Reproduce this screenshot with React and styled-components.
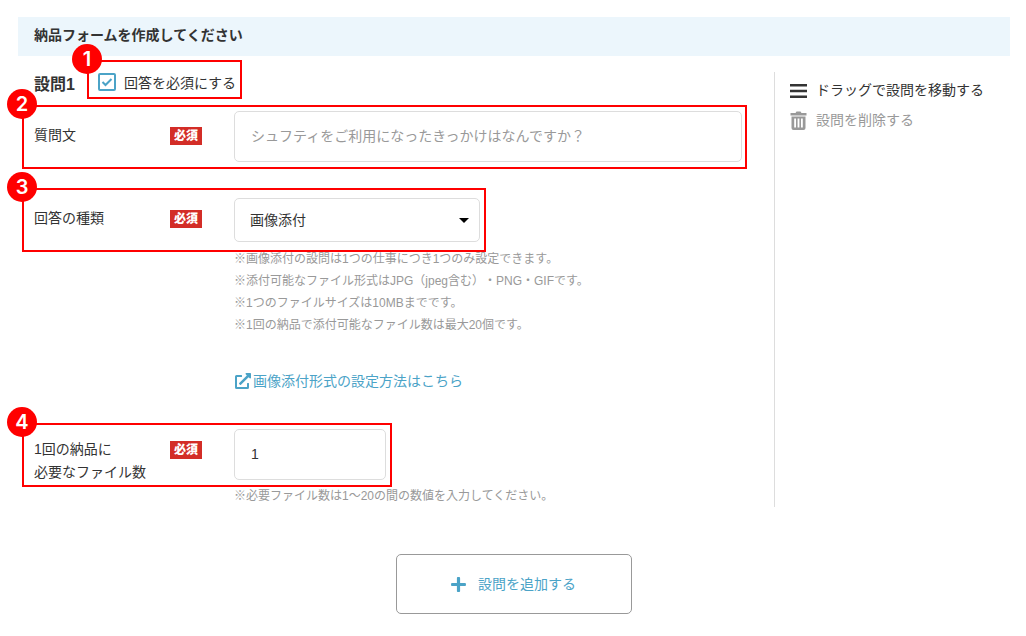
import styled, { createGlobalStyle } from "styled-components";
import { FaPlus, FaExternalLinkAlt } from "react-icons/fa";

const hints = [
  "※画像添付の設問は1つの仕事につき1つのみ設定できます。",
  "※添付可能なファイル形式はJPG（jpeg含む）・PNG・GIFです。",
  "※1つのファイルサイズは10MBまでです。",
  "※1回の納品で添付可能なファイル数は最大20個です。",
];

function Marker({ number, inset }) {
  return (
    <Frame $inset={inset}>
      <Circle>{number}</Circle>
    </Frame>
  );
}

function App() {
  return (
    <>
      <GlobalStyle />
      <Page>
        <Banner>納品フォームを作成してください</Banner>
        <Body>
          <Main>
            <Heading>
              <h2>設問1</h2>
              <CheckLabel>
                <CheckWrap>
                  <Checkbox type="checkbox" defaultChecked />
                  <svg viewBox="0 0 18 18" aria-hidden="true">
                    <path d="M4.5 9l3 3L13.5 6" />
                  </svg>
                </CheckWrap>
                <span>回答を必須にする</span>
                <Marker number={1} inset="-11px -6px -6px -11px" />
              </CheckLabel>
            </Heading>

            <Field $wide>
              <Label htmlFor="question">質問文</Label>
              <Required>必須</Required>
              <TextInput
                id="question"
                placeholder="シュフティをご利用になったきっかけはなんですか？"
              />
              <Marker number={2} inset="-6px -5px -7px -12px" />
            </Field>

            <Section>
              <Field>
                <Label htmlFor="kind">回答の種類</Label>
                <Required>必須</Required>
                <SelectWrap>
                  <Select id="kind" defaultValue="image">
                    <option value="image">画像添付</option>
                  </Select>
                  <svg viewBox="0 0 10 5" aria-hidden="true">
                    <path d="M0 0h10L5 5z" />
                  </svg>
                </SelectWrap>
                <Marker number={3} inset="-6px -6px -7px -12px" />
              </Field>
              <Hints $spaced>
                {hints.map((hint) => (
                  <li key={hint}>{hint}</li>
                ))}
              </Hints>
              <HelpLink href="#help">
                <FaExternalLinkAlt size={16} />
                画像添付形式の設定方法はこちら
              </HelpLink>
            </Section>

            <Section>
              <Field $tall>
                <Label htmlFor="files">
                  1回の納品に
                  <br />
                  必要なファイル数
                </Label>
                <Required>必須</Required>
                <TextInput id="files" defaultValue="1" $short />
                <Marker number={4} inset="-6px -6px -2px -12px" />
              </Field>
              <Hints>
                <li>※必要ファイル数は1〜20の間の数値を入力してください。</li>
              </Hints>
            </Section>
          </Main>

          <Side>
            <SideButton>
              <svg width="18" height="20" viewBox="0 0 18 20" aria-hidden="true">
                <path
                  fill="currentColor"
                  d="M0 3h17v2.6H0zM0 8.7h17v2.6H0zM0 14.4h17V17H0z"
                />
              </svg>
              ドラッグで設問を移動する
            </SideButton>
            <SideButton $muted>
              <svg width="18" height="20" viewBox="0 0 18 20" aria-hidden="true">
                <path
                  fill="currentColor"
                  fillRule="evenodd"
                  d="M.5 2h5l1-1.5h4l1 1.5h5v2.6H.5zM1.5 5.5h14V17a2 2 0 0 1-2 2h-10a2 2 0 0 1-2-2zM4.2 7.5v9h1.8v-9zM7.6 7.5v9h1.8v-9zM11 7.5v9h1.8v-9z"
                />
              </svg>
              設問を削除する
            </SideButton>
          </Side>
        </Body>
        <AddButton>
          <FaPlus size={17} />
          設問を追加する
        </AddButton>
      </Page>
    </>
  );
}

const GlobalStyle = createGlobalStyle`
  * {
    box-sizing: border-box;
  }
  body {
    margin: 0;
    background: #fff;
    color: #333;
    font-size: 14px;
    font-family: "Liberation Sans", "Noto Sans CJK JP", sans-serif;
    text-spacing-trim: space-all;
  }
  button, input, select {
    font: inherit;
    color: inherit;
  }
`;

const Page = styled.div`
  display: flex;
  flex-direction: column;
  padding: 17px 16px 22px 18px;
`;

const Banner = styled.h1`
  margin: 0;
  padding: 0 16px 2px;
  background: #ecf6fc;
  font-size: 14px;
  font-weight: 700;
  line-height: 37px;
`;

const Body = styled.div`
  display: flex;
  margin-top: 15px;
`;

const Main = styled.main`
  flex: 1;
  padding: 0 32px 0 16px;
`;

const Heading = styled.div`
  display: flex;
  gap: 23px;
  height: 40px;

  h2 {
    margin: 0;
    font-size: 16px;
    line-height: 28px;
  }
`;

const CheckLabel = styled.label`
  position: relative;
  display: flex;
  align-items: center;
  gap: 8px;
  height: 22px;
`;

const CheckWrap = styled.span`
  display: grid;
  width: 18px;
  height: 18px;

  > * {
    grid-area: 1 / 1;
  }
  svg {
    fill: none;
    stroke: #4ba3c7;
    stroke-width: 2;
    pointer-events: none;
  }
  input:not(:checked) + svg {
    display: none;
  }
`;

const Checkbox = styled.input`
  appearance: none;
  width: 18px;
  height: 18px;
  margin: 0;
  border: 2px solid #4ba3c7;
  border-radius: 2px;
`;

const Section = styled.section`
  margin-top: 32px;

  & + & {
    margin-top: 37px;
  }
`;

const Field = styled.div`
  position: relative;
  display: grid;
  grid-template-columns: 136px 64px ${(p) => (p.$wide ? "1fr" : "auto")};
  align-items: start;
  width: ${(p) => (p.$wide ? "auto" : "fit-content")};
  padding-bottom: ${(p) => (p.$tall ? 1 : 0)}px;

  > label {
    padding-top: ${(p) => (p.$tall ? 9 : 13)}px;
  }
  > label + span {
    margin-top: ${(p) => (p.$tall ? 12 : 16)}px;
  }
`;

const Label = styled.label`
  line-height: 23px;
`;

const Required = styled.span`
  width: 32px;
  background: #d32d27;
  color: #fff;
  font-size: 12px;
  font-weight: 900;
  line-height: 18px;
  text-align: center;
`;

const TextInput = styled.input`
  width: ${(p) => (p.$short ? "152px" : "100%")};
  height: 51px;
  padding: 0 16px 2px;
  border: 1px solid #ddd;
  border-radius: 5px;
  background: #fff;

  &::placeholder {
    color: #999;
    opacity: 1;
  }
`;

const SelectWrap = styled.div`
  display: grid;
  align-items: center;
  padding: 4px 0 3px;

  > * {
    grid-area: 1 / 1;
  }
  svg {
    justify-self: end;
    width: 10px;
    height: 5px;
    margin-right: 11px;
    fill: #000;
    pointer-events: none;
  }
`;

const Select = styled.select`
  appearance: none;
  width: 246px;
  height: 44px;
  padding: 0 15px 1px;
  border: 1px solid #ddd;
  border-radius: 5px;
  background: #fff;
`;

const Hints = styled.ul`
  margin: 0;
  padding: ${(p) => (p.$spaced ? 3 : 0)}px 0 0 200px;
  list-style: none;
  color: #999;
  font-size: 12px;
  line-height: 22px;
`;

const HelpLink = styled.a`
  display: flex;
  align-items: center;
  gap: 2px;
  width: fit-content;
  margin: 34px 0 0 201px;
  color: #4ba3c7;
  line-height: 22px;
  text-decoration: none;
`;

const Frame = styled.span`
  position: absolute;
  inset: ${(p) => p.$inset};
  border: 2px solid #f00;
  pointer-events: none;
`;

const Circle = styled.span`
  position: absolute;
  top: -18px;
  left: -17px;
  width: 30px;
  height: 30px;
  border-radius: 50%;
  background: #f00;
  color: #fff;
  font-family: Inter, sans-serif;
  font-size: 20px;
  font-weight: 600;
  line-height: 30px;
  text-align: center;
`;

const Side = styled.aside`
  margin-top: 1px;
  width: 236px;
  padding: 3px 0 0 15px;
  border-left: 1px solid #ddd;
`;

const SideButton = styled.button`
  display: flex;
  align-items: center;
  gap: 8px;
  height: 30px;
  padding: 0 0 2px;
  border: 0;
  background: none;
  color: ${(p) => (p.$muted ? "#999" : "#333")};

  svg {
    margin-top: 4px;
  }
`;

const AddButton = styled.button`
  display: flex;
  align-items: center;
  justify-content: center;
  gap: 11px;
  align-self: center;
  width: 236px;
  height: 60px;
  margin-top: 47px;
  padding: 0 2px 2px 0;
  border: 1px solid #999;
  border-radius: 5px;
  background: #fff;
  color: #4ba3c7;

  svg {
    margin-top: 2px;
  }
`;

export default App;
